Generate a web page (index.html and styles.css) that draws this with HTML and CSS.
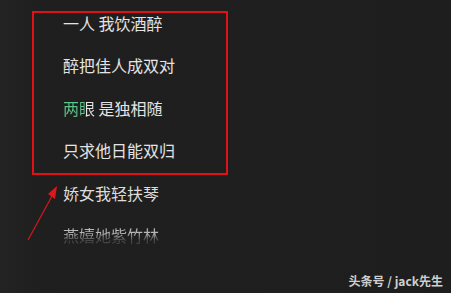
FILE: index.html
```html
<!DOCTYPE html>
<html lang="zh">
<head>
<meta charset="utf-8">
<link rel="stylesheet" href="styles.css">
</head>
<body>
<div class="stage">
  <ul class="lyrics">
    <li class="line">一人 我饮酒醉</li>
    <li class="line">醉把佳人成双对</li>
    <li class="line"><span class="sung">两眼</span> 是独相随</li>
    <li class="line">只求他日能双归</li>
    <li class="line next">娇女我轻扶琴</li>
    <li class="line fade">燕嬉她紫竹林</li>
  </ul>
  <div class="mark-box"></div>
  <svg class="mark-arrow" width="40" height="64" viewBox="0 0 40 64">
    <line x1="4" y1="62" x2="28" y2="18" stroke="#d8161c" stroke-width="1.2"/>
    <polygon points="33,8 24,16 31,21" fill="#e0161c"/>
  </svg>
  <div class="watermark">头条号 / jack先生</div>
</div>
</body>
</html>
```
FILE: styles.css
```css
html, body {
  margin: 0;
  padding: 0;
}
body {
  background: #1f1f1f;
  width: 451px;
  height: 293px;
  overflow: hidden;
  font-family: "Noto Sans CJK SC", "Noto Sans", sans-serif;
}
.stage {
  position: relative;
  width: 451px;
  height: 293px;
  background: linear-gradient(90deg, #232323 0px, #1f1f1f 40px, #1e1e1e 100%);
}
.lyrics {
  list-style: none;
  margin: 0;
  padding: 2px 0 0 63px;
}
.line {
  font-size: 16px;
  line-height: 42.4px;
  height: 42.4px;
  color: #e4e4e4;
  white-space: nowrap;
}
.sung {
  background: linear-gradient(90deg, #5dc48a 0, #5dc48a 23px, #e4e4e4 23px, #e4e4e4 100%);
  -webkit-background-clip: text;
  background-clip: text;
  color: transparent;
}
.next {
  color: #dcdcdc;
}
.fade {
  display: inline-block;
  background: linear-gradient(180deg, #b8b8b8 0, #b8b8b8 44%, #4a4a4a 62%, #2a2a2a 100%);
  -webkit-background-clip: text;
  background-clip: text;
  color: transparent;
}
.mark-box {
  position: absolute;
  left: 32px;
  top: 11px;
  width: 192px;
  height: 160px;
  border: 2px solid #e01216;
}
.mark-arrow {
  position: absolute;
  left: 24px;
  top: 178px;
}
.watermark {
  position: absolute;
  right: 8px;
  bottom: 4px;
  font-size: 12px;
  line-height: 16px;
  font-weight: 700;
  color: #cfcfcf;
}
```
